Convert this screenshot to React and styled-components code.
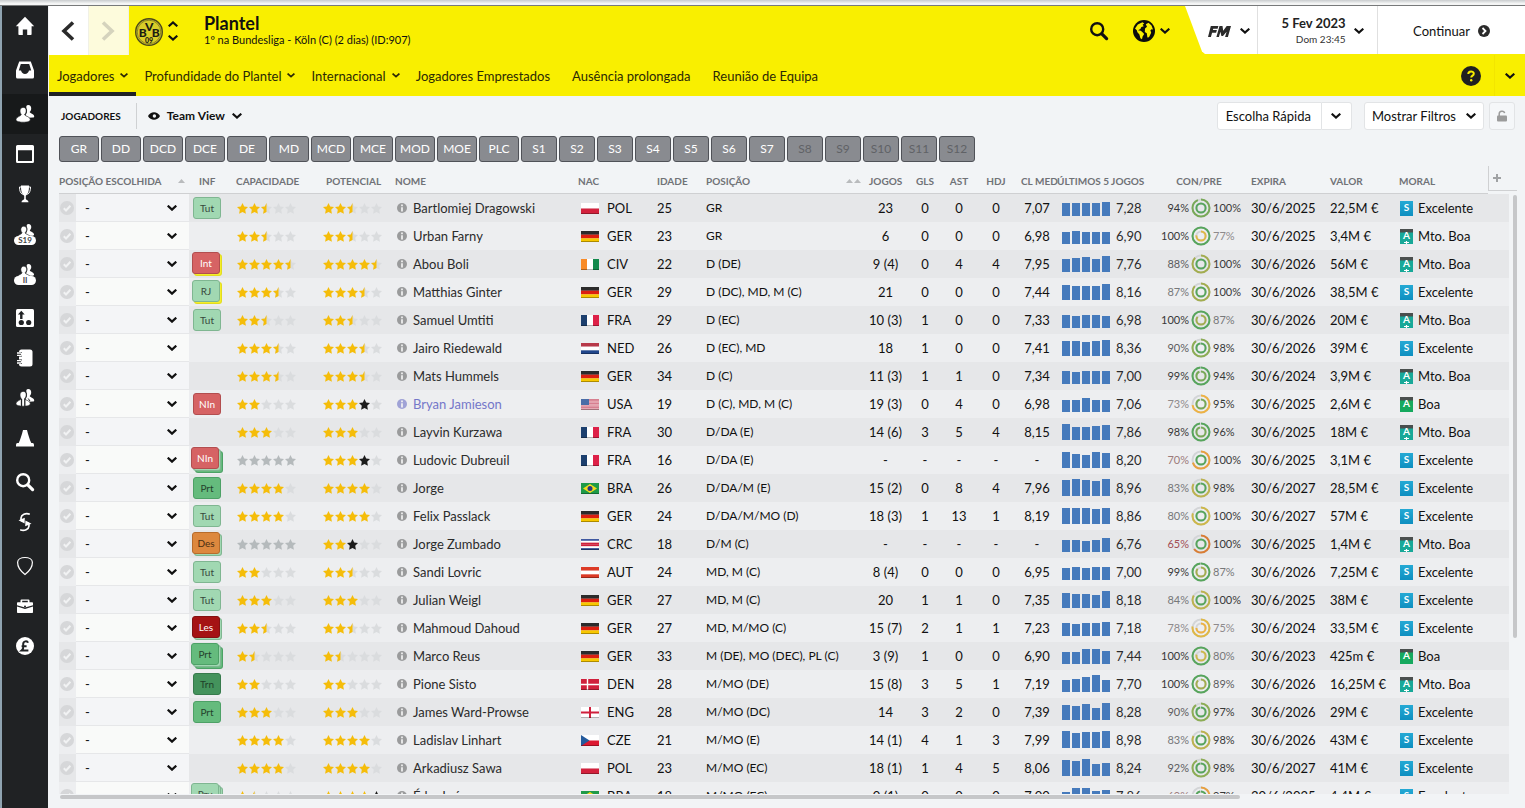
import styled, { createGlobalStyle, css } from "styled-components";

const GlobalStyle = createGlobalStyle`
  * {
    box-sizing: border-box;
  }

  body {
    margin: 0;
    background: #f2f4f6;
    color: #111;
    font-family: Lato, "Open Sans", sans-serif;
    font-size: 13px;
    line-height: 16px;
  }

  button,
  select,
  input {
    margin: 0;
    font: inherit;
    color: inherit;
  }

  svg {
    display: block;
    flex-shrink: 0;
  }
`;

const Page = styled.div`
  height: 100vh;
  display: flex;
  flex-direction: column;
  overflow: hidden;
`;

const WindowEdge = styled.div`
  height: 6px;
  flex-shrink: 0;
  background: linear-gradient(#c9ccce, #f4f5f5 70%);
  border-bottom: 1px solid #77797a;
`;

const Shell = styled.div`
  flex: 1;
  min-height: 0;
  display: flex;
  border-left: 2px solid #8fa3b0;
`;

/* ---------- sidebar ---------- */

const Sidebar = styled.nav`
  width: 46px;
  flex-shrink: 0;
  display: flex;
  flex-direction: column;
  gap: 4px;
  background: #202224;
`;

const SideGroup = styled.div`
  display: flex;
  flex-direction: column;
`;

const SideLink = styled.a`
  height: 40px;
  display: flex;
  align-items: center;
  justify-content: center;
  color: #fff;
  background: ${(props) => (props.$active ? "#17191a" : "transparent")};
`;

const SideBadge = styled.span`
  display: block;
  min-width: 22px;
  height: 9px;
  border-radius: 5px;
  background: #fff;
  color: #444;
  font-size: 8px;
  font-weight: 700;
  line-height: 9px;
  text-align: center;
`;

const SideStack = styled.span`
  display: flex;
  flex-direction: column;
  align-items: center;
`;

/* ---------- header ---------- */

const Main = styled.main`
  flex: 1;
  min-width: 0;
  display: flex;
  flex-direction: column;
  padding-left: 1px;
`;

const TopBar = styled.header`
  height: 49px;
  flex-shrink: 0;
  display: flex;
  background: #f9ef00;
`;

const ArrowButton = styled.button`
  width: 40px;
  height: 49px;
  display: flex;
  align-items: center;
  justify-content: center;
  border: 0;
  border-right: 1px solid #f1f1e6;
  padding: 1px 2px 0 0;
  background: ${(props) => (props.disabled ? "#fdfbdc" : "#fff")};
  color: ${(props) => (props.disabled ? "#d5d3bd" : "#2b2b2b")};
`;

const Crest = styled.a`
  display: flex;
  align-items: center;
  padding: 2px 5px 0 6px;
`;

const ClubSwitch = styled.div`
  display: flex;
  flex-direction: column;
  justify-content: center;
  gap: 8px;
  padding-top: 1px;
`;

const PlainButton = styled.button`
  display: flex;
  align-items: center;
  gap: ${(props) => props.$gap || 5}px;
  border: 0;
  padding: 0;
  background: none;
`;

const Heading = styled.div`
  flex: 1;
  padding: 6px 0 0 26px;
`;

const Title = styled.h1`
  margin: 0;
  font-size: 18px;
  font-weight: 700;
  line-height: 22px;
`;

const SubTitle = styled.p`
  margin: 0;
  font-size: 11px;
  line-height: 12px;
`;

const TopTools = styled.div`
  display: flex;
  align-items: center;
  gap: 24px;
  padding: 1px 15px 0 0;
`;

const WhiteTools = styled.div`
  height: 48px;
  display: flex;
  background: #fff;
  clip-path: polygon(0 0, 100% 0, 100% 100%, 20px 100%, 17px 95%);
`;

const ToolCell = styled.div`
  display: flex;
  align-items: center;
  justify-content: center;
  gap: 8px;
  width: ${(props) => props.$width}px;
  padding: 2px 0 0 ${(props) => props.$indent || 0}px;
  border-left: ${(props) => (props.$line ? "1px solid #e0e0e0" : 0)};
`;

const Brand = styled.span`
  color: #2b2b2b;
`;

const DateText = styled.span`
  text-align: right;
  font-size: 10px;
  color: #333;

  strong {
    display: block;
    font-size: 13px;
    color: #222;
  }
`;

const Tabs = styled.nav`
  height: 41px;
  flex-shrink: 0;
  display: flex;
  background: #f9ef00;
`;

const Tab = styled.a`
  display: flex;
  align-items: center;
  gap: 6px;
  padding: 4px 8px 0;
  margin-right: ${(props) => (props.$plain ? 6 : 0)}px;
  border-bottom: 4px solid ${(props) => (props.$active ? "#202224" : "transparent")};
  color: #2b2905;
  text-decoration: none;
`;

const TabsEnd = styled.div`
  margin-left: auto;
  display: flex;
  align-items: center;

  button:last-child {
    width: 31px;
    height: 41px;
    margin-left: 13px;
    justify-content: center;
    border-left: 1px solid #f3e500;
  }
`;

/* ---------- toolbar ---------- */

const Toolbar = styled.div`
  height: 40px;
  flex-shrink: 0;
  display: flex;
  align-items: center;
  padding: 0 10px 0 12px;
`;

const SectionName = styled.h2`
  margin: 0;
  padding-right: 15px;
  border-right: 1px solid #cfd1d3;
  font-size: 10px;
  font-weight: 700;
  line-height: 26px;
`;

const ViewButton = styled(PlainButton)`
  padding-left: 11px;
  font-size: 12px;
  font-weight: 700;
`;

const ToolbarEnd = styled.div`
  margin-left: auto;
  display: flex;
  gap: 12px;
`;

const BoxButton = styled.button`
  height: 28px;
  display: flex;
  align-items: center;
  justify-content: center;
  gap: 10px;
  padding: 0 8px;
  border: 1px solid #e2e4e6;
  border-radius: 3px;
  background: #fff;
`;

const Split = styled.div`
  display: flex;

  ${BoxButton}:first-child {
    padding: 0 10px 0 8px;
    border-radius: 3px 0 0 3px;
  }

  ${BoxButton}:last-child {
    width: 30px;
    padding: 0;
    border-left: 0;
    border-radius: 0 3px 3px 0;
  }
`;

const LockButton = styled(BoxButton)`
  width: 26px;
  padding: 0;
  background: #f5f7f9;
  color: #9b9b9b;
`;

const FilterGroup = styled.div`
  display: flex;
  gap: 5px;

  ${BoxButton}:first-child {
    padding: 0 7px;
  }
`;

const SlotBar = styled.div`
  display: flex;
  flex-shrink: 0;
  gap: 2px;
  padding-left: 10px;
`;

const SlotButton = styled.button`
  width: ${(props) => (props.$narrow ? 36 : 40)}px;
  height: 26px;
  padding: 0;
  border: 1px solid #505258;
  border-radius: 3px;
  background: #898b90;
  color: #fff;
  font-size: 12px;
  line-height: 22px;

  &:disabled {
    color: #606266;
  }
`;

/* ---------- table ---------- */

const TableArea = styled.section`
  flex: 1;
  min-height: 0;
  display: flex;
  gap: 4px;
  padding: 4px 8px 0 10px;
`;

const TableClip = styled.div`
  flex: 1;
  min-width: 0;
  overflow-x: visible;
  overflow-y: clip;
`;

const Table = styled.table`
  width: 100%;
  table-layout: fixed;
  border-spacing: 0;
  white-space: nowrap;
`;

const HeadCell = styled.th`
  height: 28px;
  padding: 2px 4px 0;
  border-bottom: 1px solid #cfd0d2;
  color: #707276;
  font-size: 10px;
  font-weight: 700;
  text-align: ${(props) => props.$align || "left"};
  padding-left: ${(props) => props.$left ?? 4}px;
`;

const HeadFlex = styled.span`
  display: flex;
  align-items: center;
  justify-content: space-between;
`;

const AddCell = styled.th`
  padding: 0;
  vertical-align: top;

  button {
    width: 29px;
    height: 25px;
    display: block;
    padding: 0 0 0 4px;
    border: solid #cfd0d2;
    border-width: 0 0 1px 1px;
    background: none;
    color: #a0a2a4;
  }
`;

const Row = styled.tr`
  background: #edeef0;

  &:nth-child(odd) {
    background: #e6e7e9;
  }
`;

const Cell = styled.td`
  height: 28px;
  padding: 0 4px;
  text-align: ${(props) => props.$align || "left"};
  padding-left: ${(props) => props.$left ?? 4}px;
`;

const FlushCell = styled.td`
  height: 28px;
  padding: 0;
`;

const NumCell = styled(FlushCell)`
  text-align: center;
`;

const PositionCell = styled(Cell)`
  font-size: 12px;
`;

const Tick = styled.input`
  appearance: none;
  display: block;
  width: 14px;
  height: 14px;
  margin-left: 1px;
  border-radius: 50%;
  background: #d6d7d9
    url("data:image/svg+xml,%3Csvg xmlns='http://www.w3.org/2000/svg' viewBox='0 0 14 14'%3E%3Cpath d='M3.8 7.3 6 9.5l4.4-4.7' fill='none' stroke='%23f1f2f3' stroke-width='2'/%3E%3C/svg%3E");
`;

const SlotPicker = styled.label`
  display: grid;
  grid-template-columns: 1fr 22px;
  align-items: center;
  height: 28px;
  background: #f4f5f7;
  box-shadow: inset 0 -1px #e6e7e9;

  ${Row}:nth-child(even) & {
    background: #f9faf9;
  }

  select {
    grid-area: 1 / 1 / 2 / 3;
    width: 100%;
    height: 28px;
    appearance: none;
    border: 0;
    padding: 0 9px;
    background: none;
  }

  svg {
    grid-area: 1 / 2;
    pointer-events: none;
  }
`;

const badgeTones = {
  light: { bg: "#a1d8b2", edge: "#7fb691", text: "#37483c" },
  green: { bg: "#65bb7d", edge: "#4da166", text: "#24422c" },
  dark: { bg: "#44935c", edge: "#377a4c", text: "#1f4029" },
  red: { bg: "#d66364", edge: "#b24e4f", text: "#fff" },
  crimson: { bg: "#a51214", edge: "#841012", text: "#fff" },
  orange: { bg: "#dd883e", edge: "#b76c2c", text: "#4a2e12" },
  yellow: { bg: "#f4ee2a", edge: "#e2dc20", text: "#333" },
};

const underLayers = (under) =>
  under
    .map((tone, i) => {
      const { bg, edge } = badgeTones[tone];
      const shift = 2 * i + 2;
      return `${shift}px ${shift}px 0 -1px ${bg}, ${shift}px ${shift}px 0 0 ${edge}`;
    })
    .join(", ");

const InfoBadge = styled.span`
  display: block;
  width: 28px;
  height: 22px;
  margin: ${({ $under }) => ($under.length ? `-${$under.length * 2}px 0 0 -${$under.length}px` : 0)};
  border: 1px solid ${({ $tone }) => badgeTones[$tone].edge};
  border-radius: 3px;
  background: ${({ $tone }) => badgeTones[$tone].bg};
  color: ${({ $tone }) => badgeTones[$tone].text};
  font-size: 10px;
  line-height: 20px;
  text-align: center;
  ${({ $under }) => $under.length > 0 && css`box-shadow: ${underLayers($under)};`}
`;

const StarRow = styled.span`
  display: flex;
  gap: 1px;
`;

const Inline = styled.span`
  display: flex;
  align-items: center;
  gap: ${(props) => props.$gap}px;
`;

const PlayerLink = styled.a`
  display: flex;
  align-items: center;
  gap: 6px;
  color: ${(props) => (props.$loan ? "#7477c9" : "#2b2b2b")};
  text-decoration: none;

  svg {
    color: ${(props) => (props.$loan ? "#9fa2d6" : "#9a9b9c")};
  }
`;

const Form = styled.span`
  display: flex;
  align-items: center;
  gap: 6px;
  color: #2b2b2b;
`;

const Bars = styled.span`
  display: flex;
  align-items: flex-end;
  gap: 2px;
  height: 16px;

  i {
    width: 8px;
    background: #457abc;
  }
`;

const Fitness = styled.span`
  display: grid;
  grid-template-columns: 38px 20px 1fr;
  align-items: center;
  column-gap: 2px;
  font-size: 11px;

  span:first-child {
    text-align: right;
  }
`;

const Percent = styled.span`
  color: ${(props) => percentColor(props.$value)};
`;

const moraleTones = {
  S: "linear-gradient(#25a9d4, #0f8fc0)",
  A: "linear-gradient(#4a4f4e 3px, #16a95e 4px)",
  "A+": "linear-gradient(#4a4f4e 3px, #18a898 4px)",
};

const MoraleIcon = styled.span`
  display: flex;
  flex-direction: column;
  align-items: center;
  width: 13px;
  height: 15px;
  background: ${(props) => moraleTones[props.$grade]};
  color: #fff;
  font-size: 10px;
  font-weight: 700;
  line-height: 12px;
`;

const HScroll = styled.div`
  height: 14px;
  flex-shrink: 0;
  padding: 1px 8px 0 11px;
`;

const HThumb = styled.div`
  width: 81%;
  height: 4px;
  border-radius: 2px;
  background: #c6c7c9;
`;

const VTrack = styled.div`
  width: 4px;
  padding-top: 29px;
`;

const VThumb = styled.div`
  height: 74%;
  border-radius: 2px;
  background: #c6c7c9;
`;

/* ---------- drawings ---------- */

const Chevron = ({ size = 10, weight = 2.1, up }) => (
  <svg width={size} height={(size * 6) / 10} viewBox="0 0 10 6" fill="none" stroke="currentColor" strokeWidth={weight}>
    <path d={up ? "M.7 5.300 5 1.400l4.300 3.900" : "M.7.7 5 4.600 9.300.7"} />
  </svg>
);

const Glyph = ({ children, size = 20 }) => (
  <svg width={size} height={size} viewBox="0 0 20 20" fill="currentColor">
    {children}
  </svg>
);

const dark = "#202224";

const HomeIcon = () => (
  <Glyph>
    <path d="M10 .8.8 10.2h2.6V18c0 .6.4 1 1 1h3.400v-5.600h4.400V19h3.400c.6 0 1-.4 1-1v-7.800h2.600z" />
  </Glyph>
);

const InboxIcon = () => (
  <Glyph>
    <path
      fillRule="evenodd"
      d="M4.200 1.500h11.600L19 10.500V17a1.500 1.500 0 0 1-1.500 1.500h-15A1.500 1.500 0 0 1 1 17v-6.500zM5.800 4 3.800 10.500H6c.6 2.200 2 3.500 4 3.500s3.400-1.300 4-3.500h2.200L14.200 4z"
    />
  </Glyph>
);

const People = () => (
  <>
    <path d="M13.200 1c2 0 3.200 1.500 3 3.700-.1 1.500-.8 2.700-1.600 3.400 0 1 4.600 1.900 4.600 4.400 0 .6-.5 1-1.200 1.100l-4.600.2c-.8-1.600-3-2-3-2.600 1.500-1.600 2.400-4.600 1-7.300C11 2.200 11.600 1 13.200 1z" />
    <path
      d="M8.200 3.400c2 0 3.100 1.500 3 3.600-.1 1.600-.8 2.900-1.700 3.500 0 1.700 5.800 1.800 5.800 5.200 0 1.700-3.200 2.500-7.200 2.500S1 17.300 1 15.700c0-3 5.300-3.500 5.300-5.200C5.500 9.700 5 8.500 5 7c0-2.200 1.200-3.600 3.200-3.600z"
      stroke={dark}
      strokeWidth=".6"
    />
  </>
);

const SquadIcon = () => (
  <Glyph>
    <People />
  </Glyph>
);

const YouthSquad = ({ label }) => (
  <SideStack>
    <svg width="19" height="13" viewBox="0 0 20 14" fill="currentColor">
      <People />
    </svg>
    <SideBadge>{label}</SideBadge>
  </SideStack>
);

const CalendarIcon = () => (
  <Glyph>
    <path
      fillRule="evenodd"
      d="M2.500 1h15A1.500 1.500 0 0 1 19 2.500v15a1.500 1.500 0 0 1-1.500 1.500h-15A1.500 1.500 0 0 1 1 17.500v-15A1.500 1.500 0 0 1 2.500 1zM3 6.200V17h14V6.200z"
    />
  </Glyph>
);

const TrophyIcon = () => (
  <Glyph>
    <path d="M6 1.500h8c.1 5.500-.8 8.500-3.200 10.200V15c.6 1 2.700 1.300 2.700 3.200h-7C6.500 16.300 8.600 16 9.200 15v-3.300C6.800 10 5.900 7 6 1.500z" />
    <path d="M6 3H4.500c0 3.500.8 6 3 7.500M14 3h1.500c0 3.500-.8 6-3 7.500" fill="none" stroke="currentColor" />
  </Glyph>
);

const TacticsIcon = () => (
  <Glyph>
    <rect x="1" y="1" width="18" height="18" rx="1.500" />
    <g fill={dark}>
      <path d="M6.300 2.800 9.700 6.600H7.500V11H5.100V6.600H2.900z" />
      <circle cx="6.300" cy="14.500" r="2.600" />
      <circle cx="13.700" cy="14.500" r="2.600" />
    </g>
  </Glyph>
);

const NotebookIcon = () => (
  <Glyph>
    <rect x="4" y="1.500" width="13.500" height="17" rx="2.500" />
    <g fill="none">
      <path d="M1.500 6.200h5.500M1.500 13.800h5.500" stroke={dark} strokeWidth="4.600" />
      <path d="M2 5h3.600a1.200 1.200 0 0 1 0 2.400H2M2 12.600h3.600a1.200 1.200 0 0 1 0 2.400H2" stroke="currentColor" strokeWidth="1.300" />
    </g>
  </Glyph>
);

const StaffIcon = () => (
  <Glyph>
    <People />
    <path d="M6.500 11v8M9.800 11v8" stroke={dark} strokeWidth="1.300" />
    <path d="M13.200 10.500 15 13" stroke={dark} />
  </Glyph>
);

const ConeIcon = () => (
  <Glyph>
    <path d="M8 2h4c1.300 5 2.600 9.500 4.300 13h1.200c1 0 1.500.8 1.500 2.500v1H1v-1C1 15.800 1.500 15 2.500 15h1.200C5.400 11.500 6.700 7 8 2z" />
  </Glyph>
);

const SearchIcon = ({ size = 20 }) => (
  <Glyph size={size}>
    <circle cx="8.200" cy="8.200" r="6" fill="none" stroke="currentColor" strokeWidth="2.400" />
    <path d="m12.800 12.800 4.800 4.800" stroke="currentColor" strokeWidth="3.200" strokeLinecap="round" />
  </Glyph>
);

const TransferIcon = () => (
  <Glyph>
    <g fill="none" stroke="currentColor" strokeWidth="1.700">
      <path d="M14.800 2.200C10.500.6 6.300 2.600 6 6c-.1 1.300.2 2.400.8 3.400" />
      <path d="M5.200 17.800c4.300 1.600 8.500-.4 8.800-3.800.1-1.300-.2-2.400-.8-3.400" />
    </g>
    <path d="M3.500 8.200 9.600 11.500 9.800 5.800zM16.500 11.800 10.400 8.500l-.2 5.700z" />
  </Glyph>
);

const ClubIcon = () => (
  <Glyph>
    <path
      d="M10 18.500C5.500 15 2.500 10.500 2.600 6.200 2.800 3.400 6 1.500 10 1.500s7.200 1.900 7.400 4.700c.1 4.300-2.900 8.800-7.400 12.300z"
      fill="none"
      stroke="currentColor"
      strokeWidth="1.200"
    />
  </Glyph>
);

const BoardIcon = () => (
  <Glyph>
    <path
      fillRule="evenodd"
      d="M6.500 3.500h7a1 1 0 0 1 1 1v1.700h2.700c.5 0 .8.300.8.800v2.200l-8 2.300-8-2.300V7c0-.5.300-.8.800-.8h2.700V4.500a1 1 0 0 1 1-1zm.7 1.300v1.400h5.600V4.800z"
    />
    <path d="m2 10.500 8 2.400 8-2.400v5.700c0 .5-.3.800-.8.800H2.800a.8.800 0 0 1-.8-.8z" />
    <circle cx="10" cy="10.500" r="1" fill={dark} />
  </Glyph>
);

const MoneyIcon = () => (
  <Glyph>
    <circle cx="10" cy="10" r="9" />
    <path d="M13 6.700C12.300 4.600 8.200 4.800 8.200 8c0 2.500 1 4.500-1.400 6.400h6.600M6.600 10.300h5" fill="none" stroke={dark} strokeWidth="2" />
  </Glyph>
);

const EyeIcon = () => (
  <svg width="12" height="12" viewBox="0 0 12 12">
    <path d="M0 6c1.300-2.500 3.500-3.800 6-3.800S10.700 3.500 12 6c-1.300 2.500-3.500 3.800-6 3.800S1.300 8.500 0 6z" fill="#111" />
    <circle cx="6.400" cy="6" r="1.700" fill="#f2f4f6" />
  </svg>
);

const GlobeIcon = () => (
  <svg width="22" height="22" viewBox="0 0 22 22">
    <circle cx="11" cy="11" r="11" fill="#0c0c0c" />
    <path
      fill="#f9ef00"
      d="M2 8.500 4.800 4.500 9.500 2.200l1.700 1.300-1.600 1.200 1.200 1.500-2.400.8-1 2-2.400 1.200 2.800.6 2 1.700 1.400 1.500-1.600 2.400-.6 2.800-1.600-.9-1-3.800-2-2.300-.6-2zM12.800 4.300 15.500 2.800l3 2.700 1.500 4-1.400-.2-1.200 1 .8 2.400-2.200 4.500-1.600.3-.6-4.300-2-1.300.2-3.500 2-1.600z"
    />
  </svg>
);

const FmLogo = () => (
  <svg width="23" height="11" viewBox="0 0 23 11" fill="currentColor">
    <path d="M2.800 0h7.600l-.8 2.800H5.300l-.4 1.300h4l-.8 2.700H4.100L2.900 11H0z" />
    <path d="M11.500 0h3l.7 4.700L18.700 0H23l-3.100 11h-2.800l1.500-5.300L15 10h-1.600l-1-4.300L10.900 11H8.400z" />
  </svg>
);

const GoIcon = () => (
  <svg width="12" height="12" viewBox="0 0 12 12">
    <circle cx="6" cy="6" r="6" fill="#2b2b2b" />
    <path d="m4.500 3 3 3-3 3" fill="none" stroke="#fff" strokeWidth="1.800" />
  </svg>
);

const HelpIcon = () => (
  <svg width="20" height="20" viewBox="0 0 20 20">
    <circle cx="10" cy="10" r="10" fill="#202020" />
    <path d="M7.300 8C7.300 4.700 12.800 4.700 12.800 7.800c0 2-2.600 1.700-2.600 3.800" fill="none" stroke="#f9ef00" strokeWidth="2" />
    <circle cx="10.200" cy="14.200" r="1.200" fill="#f9ef00" />
  </svg>
);

const LockIcon = () => (
  <svg width="10" height="12" viewBox="0 0 10 12">
    <rect y="5.500" width="10" height="6" rx="1" fill="currentColor" />
    <path d="M2.200 6V3.800C2.200.6 7.200.3 7.600 3.200" fill="none" stroke="currentColor" strokeWidth="1.500" />
  </svg>
);

const InfoIcon = () => (
  <svg width="10" height="10" viewBox="0 0 10 10">
    <circle cx="5" cy="5" r="5" fill="currentColor" />
    <path d="M5 1.500v1.700M5 4.200v4.300" stroke="#f3f3f3" strokeWidth="1.700" />
  </svg>
);

const SortMark = ({ count = 1 }) => (
  <svg width={count * 8 - 1} height="4" viewBox={`0 0 ${count * 8 - 1} 4`} fill="#b9bbbd">
    {Array.from({ length: count }, (_, i) => (
      <path key={i} d={`M${i * 8} 4 ${i * 8 + 3.5} 0l3.500 4z`} />
    ))}
  </svg>
);

const ClubCrest = () => (
  <svg width="28" height="28" viewBox="0 0 28 28" fontFamily="Lato" fontWeight="900" textAnchor="middle">
    <circle cx="14" cy="14" r="13.300" fill="#d9cd28" stroke="#4d4a1a" strokeWidth="1.400" />
    <circle cx="14" cy="14" r="11.800" fill="none" stroke="#5c581e" strokeWidth=".6" />
    <g fill="#1c1c12">
      <text x="7.700" y="18.500" fontSize="12">B</text>
      <text x="14.200" y="12.500" fontSize="12">V</text>
      <text x="20.700" y="18.500" fontSize="12">B</text>
      <text x="14" y="24.500" fontSize="7">09</text>
    </g>
  </svg>
);

const starPath = "M5.500 0 7.200 3.600l3.800.5-2.800 2.700.7 4-3.400-1.900-3.400 1.900.7-4L0 4.100l3.800-.5z";
const starFill = { F: "#f5bd0a", B: "#1c1c1c", G: "#b5babc", E: "#dadcde", H: "#dadcde" };

const Stars = ({ value }) => (
  <StarRow role="img" aria-label={value}>
    {[...value].map((kind, i) => (
      <svg key={i} width="11" height="11" viewBox="0 0 11 11">
        <path d={starPath} fill={starFill[kind]} />
        {kind === "H" && <path d="M5.500 0v8.900l-3.400 1.900.7-4L0 4.100l3.800-.5z" fill={starFill.F} />}
      </svg>
    ))}
  </StarRow>
);

const H = (colors) => colors.map((c, i) => <rect key={i} width="18" height={11 / colors.length + 0.1} y={(11 / colors.length) * i} fill={c} />);
const V = (colors) => colors.map((c, i) => <rect key={i} width="6" height="11" x={6 * i} fill={c} />);

const flags = {
  POL: H(["#fff", "#d3213d"]),
  GER: H(["#2b2b2b", "#dc1f10", "#f8c800"]),
  CIV: V(["#f98b27", "#fff", "#138a4d"]),
  FRA: V(["#1c3f6e", "#fff", "#dd2148"]),
  NED: H(["#b8394a", "#fff", "#21468b"]),
  AUT: H(["#dc3a26", "#fff", "#dc3a26"]),
  CRC: H(["#3f58a0", "#fff", "#d0203c", "#d0203c", "#fff", "#2a4590"]),
  USA: (
    <>
      {H(["#d77f90", "#e6a3ae", "#d77f90", "#e6a3ae", "#d77f90", "#e6a3ae"])}
      <rect width="8" height="6" fill="#4a6da7" />
    </>
  ),
  BRA: (
    <>
      <rect width="18" height="11" fill="#1e9a48" />
      <path d="m9 1 7 4.500-7 4.500-7-4.500z" fill="#f4dc1c" />
      <circle cx="9" cy="5.500" r="2.500" fill="#2a3a80" />
    </>
  ),
  DEN: (
    <>
      <rect width="18" height="11" fill="#d0203c" />
      <path d="M6.500 0v11M0 5.500h18" stroke="#fff" strokeWidth="1.400" />
    </>
  ),
  ENG: (
    <>
      <rect width="18" height="11" fill="#fff" />
      <path d="M9 0v11M0 5.500h18" stroke="#d0203c" strokeWidth="2" />
    </>
  ),
  CZE: (
    <>
      {H(["#fff", "#dc1830"])}
      <path d="M0 0l8.500 5.500L0 11z" fill="#245a9c" />
    </>
  ),
};

const Flag = ({ code }) => (
  <svg width="18" height="11" viewBox="0 0 18 11">
    {flags[code]}
    <path d="M0 10.500h18" stroke="#000" strokeOpacity=".3" />
  </svg>
);

const ringStops = [
  [97, "#57a55c"],
  [94, "#78a957"],
  [90, "#8dad55"],
  [86, "#a3ad4f"],
  [82, "#bcb24f"],
  [79, "#cdb84b"],
  [77, "#dfb846"],
  [73, "#eeb243"],
  [68, "#e8a03f"],
  [0, "#d97d34"],
];

const ringColor = (value) => ringStops.find(([min]) => value >= min)[1];

const percentColor = (value) => {
  if (value >= 94) return "#383838";
  if (value >= 88) return "#5c5c5e";
  if (value >= 80) return "#77787a";
  if (value >= 72) return "#8e8a8c";
  return value >= 68 ? "#9c7b7b" : "#a24d55";
};

const Ring = ({ r, value }) => (
  <>
    <circle cx="10" cy="10" r={r} stroke="#d3d5d7" />
    <circle cx="10" cy="10" r={r} stroke={ringColor(value)} pathLength="100" strokeDasharray={`${value} 100`} transform="rotate(-90 10 10)" />
  </>
);

const Rings = ({ outer, inner }) => (
  <svg width="20" height="20" viewBox="0 0 20 20" fill="none" strokeWidth="2">
    <Ring r={8.5} value={outer} />
    <Ring r={4.6} value={inner} />
  </svg>
);

const Morale = ({ grade }) => (
  <MoraleIcon $grade={grade}>
    {grade[0]}
    {grade === "A+" && (
      <svg width="5" height="3" viewBox="0 0 5 3">
        <path d="M0 1.500h5M2.500 0v3" stroke="#fff" strokeWidth="1.200" />
      </svg>
    )}
  </MoraleIcon>
);

/* ---------- data ---------- */

const sideGroups = [
  [
    ["Plantel", SquadIcon],
    ["Calendário", CalendarIcon],
    ["Competições", TrophyIcon],
    ["Sub-19", () => <YouthSquad label="S19" />],
    ["Equipa B", () => <YouthSquad label="II" />],
  ],
  [
    ["Táticas", TacticsIcon],
    ["Relatórios", NotebookIcon],
    ["Equipa técnica", StaffIcon],
    ["Treino", ConeIcon],
  ],
  [
    ["Prospeção", SearchIcon],
    ["Transferências", TransferIcon],
  ],
  [
    ["Clube", ClubIcon],
    ["Direção", BoardIcon],
    ["Finanças", MoneyIcon],
  ],
];

const slots = ["GR", "DD", "DCD", "DCE", "DE", "MD", "MCD", "MCE", "MOD", "MOE", "PLC"];
const subs = Array.from({ length: 12 }, (_, i) => `S${i + 1}`);

const S = ["S", "Excelente"];
const AP = ["A+", "Mto. Boa"];
const A = ["A", "Boa"];

// info, ability, potential, name, country, age, position, apps, goals, assists, motm, rating, bars, last, condition, sharpness, expires, value, morale
const players = [
  [["Tut", "light"], "FFHEE", "FFHEE", "Bartlomiej Dragowski", "POL", 25, "GR", "23", 0, 0, 0, "7,07", [13, 13, 13, 13, 14], "7,28", 94, 100, "30/6/2025", "22,5M €", S],
  [null, "FFHEE", "FFHEE", "Urban Farny", "GER", 23, "GR", "6", 0, 0, 0, "6,98", [12, 13, 12, 12, 12], "6,90", 100, 77, "30/6/2025", "3,4M €", AP],
  [["Int", "red", "yellow"], "FFFFH", "FFFFH", "Abou Boli", "CIV", 22, "D (DE)", "9 (4)", 0, 4, 4, "7,95", [13, 14, 15, 13, 16], "7,76", 88, 100, "30/6/2026", "56M €", AP],
  [["RJ", "light", "yellow"], "FFFHE", "FFFHE", "Matthias Ginter", "GER", 29, "D (DC), MD, M (C)", "21", 0, 0, 0, "7,44", [15, 14, 14, 14, 16], "8,16", 87, 100, "30/6/2026", "38,5M €", S],
  [["Tut", "light"], "FFHEE", "FFHEE", "Samuel Umtiti", "FRA", 29, "D (EC)", "10 (3)", 1, 0, 0, "7,33", [13, 12, 13, 13, 12], "6,98", 100, 87, "30/6/2026", "20M €", AP],
  [null, "FFFHE", "FFFHE", "Jairo Riedewald", "NED", 26, "D (EC), MD", "18", 1, 0, 0, "7,41", [15, 15, 14, 15, 16], "8,36", 90, 98, "30/6/2026", "39M €", S],
  [null, "FFFHE", "FFFHE", "Mats Hummels", "GER", 34, "D (C)", "11 (3)", 1, 1, 0, "7,34", [13, 12, 13, 13, 13], "7,00", 99, 94, "30/6/2024", "3,9M €", AP],
  [["NIn", "red"], "FFEEE", "FFFBE", "Bryan Jamieson", "USA", 19, "D (C), MD, M (C)", "19 (3)", 0, 4, 0, "6,98", [12, 12, 14, 12, 12], "7,06", 73, 95, "30/6/2025", "2,6M €", A],
  [null, "FFFEE", "FFFEE", "Layvin Kurzawa", "FRA", 30, "D/DA (E)", "14 (6)", 3, 5, 4, "8,15", [16, 13, 13, 14, 15], "7,86", 98, 96, "30/6/2025", "18M €", AP],
  [["NIn", "red", "light", "green"], "GGGGG", "FFFBE", "Ludovic Dubreuil", "FRA", 16, "D/DA (E)", "-", "-", "-", "-", "-", [16, 14, 13, 16, 15], "8,20", 70, 100, "30/6/2025", "3,1M €", S],
  [["Prt", "green"], "FFFFE", "FFFFE", "Jorge", "BRA", 26, "D/DA/M (E)", "15 (2)", 0, 8, 4, "7,96", [16, 17, 16, 15, 17], "8,96", 83, 98, "30/6/2027", "28,5M €", S],
  [["Tut", "light"], "FFFFE", "FFFFE", "Felix Passlack", "GER", 24, "D/DA/M/MO (D)", "18 (3)", 1, 13, 1, "8,19", [16, 16, 16, 15, 16], "8,86", 80, 100, "30/6/2027", "57M €", S],
  [["Des", "orange", "light"], "GGGGG", "FFBEE", "Jorge Zumbado", "CRC", 18, "D/M (C)", "-", "-", "-", "-", "-", [12, 12, 11, 12, 14], "6,76", 65, 100, "30/6/2025", "1,4M €", AP],
  [["Tut", "light"], "FFEEE", "FFHEE", "Sandi Lovric", "AUT", 24, "MD, M (C)", "8 (4)", 0, 0, 0, "6,95", [12, 13, 12, 13, 13], "7,00", 99, 87, "30/6/2026", "7,25M €", S],
  [["Tut", "light"], "FFFEE", "FFFEE", "Julian Weigl", "GER", 27, "MD, M (C)", "20", 1, 1, 0, "7,35", [15, 14, 14, 13, 17], "8,18", 84, 100, "30/6/2025", "38M €", S],
  [["Les", "crimson", "light"], "FFHEE", "FFHEE", "Mahmoud Dahoud", "GER", 27, "MD, M/MO (C)", "15 (7)", 2, 1, 1, "7,23", [13, 12, 13, 13, 14], "7,18", 78, 75, "30/6/2024", "33,5M €", S],
  [["Prt", "green", "light", "green"], "FHEEE", "FHEEE", "Marco Reus", "GER", 33, "M (DE), MO (DEC), PL (C)", "3 (9)", 1, 0, 0, "6,90", [12, 12, 15, 15, 13], "7,44", 100, 80, "30/6/2023", "425m €", A],
  [["Trn", "dark"], "FFEEE", "FFEEE", "Pione Sisto", "DEN", 28, "M/MO (DE)", "15 (8)", 3, 5, 1, "7,19", [12, 13, 15, 17, 12], "7,70", 100, 89, "30/6/2026", "16,25M €", AP],
  [["Prt", "green"], "FFFEE", "FFFEE", "James Ward-Prowse", "ENG", 28, "M/MO (DC)", "14", 3, 2, 0, "7,39", [15, 14, 16, 12, 17], "8,28", 90, 97, "30/6/2026", "29M €", S],
  [null, "FFFFE", "FFFFE", "Ladislav Linhart", "CZE", 21, "M/MO (E)", "14 (1)", 4, 1, 3, "7,99", [17, 15, 16, 16, 17], "8,98", 83, 98, "30/6/2026", "43M €", S],
  [null, "FFFFE", "FFFFE", "Arkadiusz Sawa", "POL", 23, "M/MO (EC)", "18 (1)", 1, 4, 5, "8,06", [16, 15, 17, 12, 13], "8,24", 92, 98, "30/6/2027", "41M €", S],
  [["Prv", "light", "light", "light"], "FHEEE", "FFFFB", "Éder Luís", "BRA", 18, "M/MO (EC)", "0 (1)", 0, 0, 0, "7,00", [12, 16, 16, 13, 14], "7,86", 69, 97, "30/6/2025", "4,4M €", S],
];

const columns = [17, 113, 43, 87, 72, 183, 79, 49, null, 41, 38, 30, 44, 38, 95, 96, 79, 69, 93, 21];

const PlayerRow = ({ player }) => {
  const [info, ability, potential, name, country, age, position, apps, goals, assists, motm, rating, bars, last, condition, sharpness, expires, value, [grade, mood]] = player;
  return (
    <Row>
      <FlushCell>
        <Tick type="checkbox" aria-label={`Selecionar ${name}`} />
      </FlushCell>
      <FlushCell>
        <SlotPicker>
          <select aria-label={`Posição escolhida de ${name}`}>
            <option>-</option>
            {slots.map((slot) => (
              <option key={slot}>{slot}</option>
            ))}
          </select>
          <Chevron weight={2.3} />
        </SlotPicker>
      </FlushCell>
      <Cell>
        {info && (
          <InfoBadge $tone={info[1]} $under={info.slice(2)}>
            {info[0]}
          </InfoBadge>
        )}
      </Cell>
      <Cell $left={5}>
        <Stars value={ability} />
      </Cell>
      <Cell>
        <Stars value={potential} />
      </Cell>
      <Cell $left={6}>
        <PlayerLink href="#" $loan={name === "Bryan Jamieson"}>
          <InfoIcon />
          {name}
        </PlayerLink>
      </Cell>
      <Cell $left={7}>
        <Inline $gap={8}>
          <Flag code={country} />
          {country}
        </Inline>
      </Cell>
      <Cell>{age}</Cell>
      <PositionCell>{position}</PositionCell>
      <NumCell>{apps}</NumCell>
      <NumCell>{goals}</NumCell>
      <NumCell>{assists}</NumCell>
      <NumCell>{motm}</NumCell>
      <NumCell>{rating}</NumCell>
      <Cell $left={6}>
        <Form>
          <Bars>
            {bars.map((height, i) => (
              <i key={i} style={{ height }} />
            ))}
          </Bars>
          {last}
        </Form>
      </Cell>
      <FlushCell>
        <Fitness>
          <Percent $value={condition}>{condition}%</Percent>
          <Rings outer={condition} inner={sharpness} />
          <Percent $value={sharpness}>{sharpness}%</Percent>
        </Fitness>
      </FlushCell>
      <Cell>{expires}</Cell>
      <Cell>{value}</Cell>
      <Cell $left={5} colSpan={2}>
        <Inline $gap={5}>
          <Morale grade={grade} />
          {mood}
        </Inline>
      </Cell>
    </Row>
  );
};

const App = () => (
  <Page>
    <GlobalStyle />
    <WindowEdge />
    <Shell>
      <Sidebar aria-label="Principal">
        <SideLink href="#" aria-label="Início">
          <HomeIcon />
        </SideLink>
        <SideLink href="#" aria-label="Caixa de entrada">
          <InboxIcon />
        </SideLink>
        {sideGroups.map((group) => (
          <SideGroup key={group[0][0]}>
            {group.map(([label, Icon]) => (
              <SideLink key={label} href="#" aria-label={label} $active={label === "Plantel"}>
                <Icon />
              </SideLink>
            ))}
          </SideGroup>
        ))}
      </Sidebar>

      <Main>
        <TopBar>
          <ArrowButton aria-label="Anterior">
            <svg width="14" height="20" viewBox="0 0 14 20" fill="none" stroke="currentColor" strokeWidth="3.600">
              <path d="M12 1.500 3 10l9 8.500" />
            </svg>
          </ArrowButton>
          <ArrowButton aria-label="Seguinte" disabled>
            <svg width="14" height="20" viewBox="0 0 14 20" fill="none" stroke="currentColor" strokeWidth="3.600">
              <path d="m2 1.500 9 8.500-9 8.500" />
            </svg>
          </ArrowButton>
          <Crest href="#" aria-label="Borussia Dortmund">
            <ClubCrest />
          </Crest>
          <ClubSwitch>
            <PlainButton aria-label="Clube anterior">
              <Chevron up />
            </PlainButton>
            <PlainButton aria-label="Clube seguinte">
              <Chevron />
            </PlainButton>
          </ClubSwitch>
          <Heading>
            <Title>Plantel</Title>
            <SubTitle>1º na Bundesliga - Köln (C) (2 dias) (ID:907)</SubTitle>
          </Heading>
          <TopTools>
            <PlainButton aria-label="Procurar">
              <SearchIcon size={20} />
            </PlainButton>
            <PlainButton aria-label="Mundo">
              <GlobeIcon />
              <Chevron />
            </PlainButton>
          </TopTools>
          <WhiteTools>
            <ToolCell $width={72} $indent={16}>
              <PlainButton aria-label="Football Manager" $gap={9}>
                <Brand>
                  <FmLogo />
                </Brand>
                <Chevron />
              </PlainButton>
            </ToolCell>
            <ToolCell $width={120} $line $indent={10}>
              <DateText>
                <strong>5 Fev 2023</strong>
                Dom 23:45
              </DateText>
              <Chevron />
            </ToolCell>
            <ToolCell $width={148} $line>
              <PlainButton $gap={8}>
                Continuar
                <GoIcon />
              </PlainButton>
            </ToolCell>
          </WhiteTools>
        </TopBar>

        <Tabs aria-label="Plantel">
          <Tab href="#" $active>
            Jogadores <Chevron size={8} />
          </Tab>
          <Tab href="#">
            Profundidade do Plantel <Chevron size={8} />
          </Tab>
          <Tab href="#">
            Internacional <Chevron size={8} />
          </Tab>
          <Tab href="#" $plain>
            Jogadores Emprestados
          </Tab>
          <Tab href="#" $plain>
            Ausência prolongada
          </Tab>
          <Tab href="#" $plain>
            Reunião de Equipa
          </Tab>
          <TabsEnd>
            <PlainButton aria-label="Ajuda">
              <HelpIcon />
            </PlainButton>
            <PlainButton aria-label="Mais">
              <Chevron />
            </PlainButton>
          </TabsEnd>
        </Tabs>

        <Toolbar>
          <SectionName>JOGADORES</SectionName>
          <ViewButton $gap={7}>
            <EyeIcon />
            Team View
            <Chevron />
          </ViewButton>
          <ToolbarEnd>
            <Split>
              <BoxButton>Escolha Rápida</BoxButton>
              <BoxButton aria-label="Opções de escolha rápida">
                <Chevron />
              </BoxButton>
            </Split>
            <FilterGroup>
              <BoxButton>
                Mostrar Filtros
                <Chevron />
              </BoxButton>
              <LockButton aria-label="Bloquear">
                <LockIcon />
              </LockButton>
            </FilterGroup>
          </ToolbarEnd>
        </Toolbar>

        <SlotBar>
          {slots.map((slot) => (
            <SlotButton key={slot}>{slot}</SlotButton>
          ))}
          {subs.map((sub, i) => (
            <SlotButton key={sub} $narrow disabled={i > 6}>
              {sub}
            </SlotButton>
          ))}
        </SlotBar>

        <TableArea>
          <TableClip>
            <Table>
              <colgroup>
                {columns.map((width, i) => (
                  <col key={i} style={width ? { width } : undefined} />
                ))}
              </colgroup>
              <thead>
                <tr>
                  <HeadCell colSpan={2} $left={0}>
                    <HeadFlex>
                      POSIÇÃO ESCOLHIDA <SortMark />
                    </HeadFlex>
                  </HeadCell>
                  <HeadCell $left={10}>INF</HeadCell>
                  <HeadCell>CAPACIDADE</HeadCell>
                  <HeadCell $left={7}>POTENCIAL</HeadCell>
                  <HeadCell>NOME</HeadCell>
                  <HeadCell>NAC</HeadCell>
                  <HeadCell>IDADE</HeadCell>
                  <HeadCell>
                    <HeadFlex>
                      POSIÇÃO <SortMark count={2} />
                    </HeadFlex>
                  </HeadCell>
                  <HeadCell>JOGOS</HeadCell>
                  <HeadCell $align="center">GLS</HeadCell>
                  <HeadCell $align="center">AST</HeadCell>
                  <HeadCell $align="center">HDJ</HeadCell>
                  <HeadCell $left={3}>CL MED</HeadCell>
                  <HeadCell $left={1}>ÚLTIMOS 5 JOGOS</HeadCell>
                  <HeadCell $align="center">CON/PRE</HeadCell>
                  <HeadCell>EXPIRA</HeadCell>
                  <HeadCell>VALOR</HeadCell>
                  <HeadCell>MORAL</HeadCell>
                  <AddCell>
                    <button aria-label="Adicionar coluna">
                      <svg width="8" height="8" viewBox="0 0 8 8" stroke="currentColor" strokeWidth="2">
                        <path d="M4 0v8M0 4h8" />
                      </svg>
                    </button>
                  </AddCell>
                </tr>
              </thead>
              <tbody>
                {players.map((player) => (
                  <PlayerRow key={player[3]} player={player} />
                ))}
              </tbody>
            </Table>
          </TableClip>
          <VTrack>
            <VThumb />
          </VTrack>
        </TableArea>
        <HScroll>
          <HThumb />
        </HScroll>
      </Main>
    </Shell>
  </Page>
);

export default App;
